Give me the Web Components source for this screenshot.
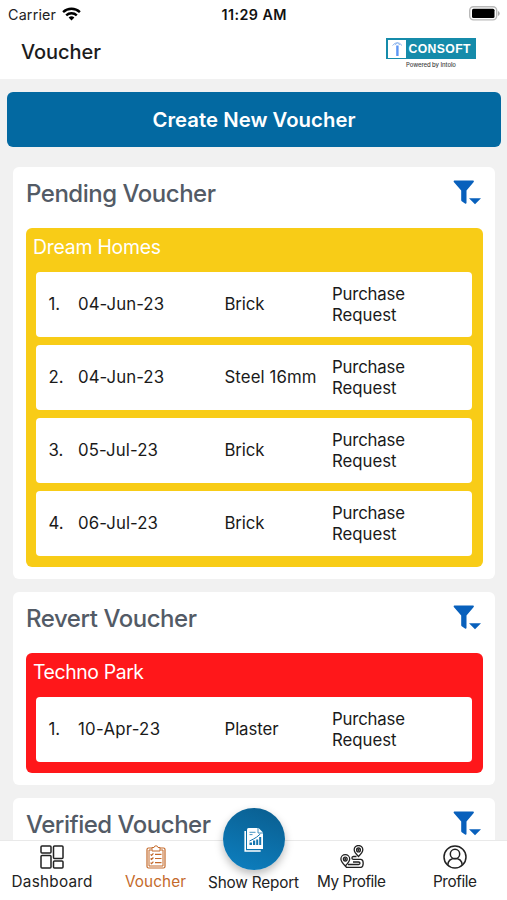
<!DOCTYPE html>
<html lang="en">
<head>
<meta charset="utf-8">
<title>Voucher</title>
<style>
html,body{margin:0;height:100%;overflow:hidden}
body{font-family:Inter,"Liberation Sans",sans-serif;background:#f1f1f1}
</style>
</head>
<body>
<voucher-app></voucher-app>
<script>
const define = (name, html, after) => customElements.define(name, class extends HTMLElement {
  connectedCallback() {
    if (this.shadowRoot) return;
    this.attachShadow({mode: 'open'}).innerHTML = typeof html === 'function' ? html(this) : html;
    if (after) after(this);
  }
});

/* One line of text, tracked so that it fills the given width. */
define('fit-text', '<style>:host{display:block;white-space:nowrap}span{display:inline-block}</style><span><slot></slot></span>', el => {
  const s = el.shadowRoot.querySelector('span');
  const n = el.textContent.length;
  const gap = (parseFloat(el.getAttribute('w')) - s.getBoundingClientRect().width) / (n - 1);
  s.style.letterSpacing = gap.toFixed(3) + 'px';
  s.style.marginRight = (-gap).toFixed(3) + 'px';
});

define('status-bar', `<style>
:host{display:grid;grid-template-columns:1fr auto 1fr;align-items:center;height:28px;padding:0 7px 0 8px;box-sizing:border-box;font-size:14.3px;color:#222}
.l{display:flex;align-items:center;gap:6px}.t{font-weight:600;color:#111}.b{justify-self:end;position:relative;top:-1px}svg{display:block}
</style>
<div class="l"><fit-text w="48">Carrier</fit-text>
<svg width="19" height="14" viewBox="0 0 19 14" fill="none" stroke="#000" stroke-width="2.4"><path d="M1.1 5.2a12 12 0 0 1 16.8 0M4.2 8.4a7.6 7.6 0 0 1 10.6 0"/><path d="M9.5 13.6l-2.9-3a4.1 4.1 0 0 1 5.8 0z" fill="#000" stroke="none"/></svg></div>
<fit-text class="t" w="65">11:29 AM</fit-text>
<svg class="b" width="31" height="15" viewBox="0 0 31 15"><rect x=".7" y=".7" width="27" height="13.2" rx="3.8" fill="#fff" stroke="#b9b9b9" stroke-width="1.4"/><rect x="3" y="2.7" width="22.5" height="9.4" rx="1.5"/><path d="M29 5v5q1.7-.8 1.7-2.5T29 5z" fill="#aaa"/></svg>`);

define('brand-logo', `<style>
:host{display:block;width:90px;text-align:center}
.m{display:flex;height:21px;box-sizing:border-box;background:#158baa;padding:1.5px;align-items:center}
svg{display:block;background:#fff}.n{font:700 12.2px "Liberation Sans",sans-serif;color:#fff;margin-left:3px}
.p{font:500 6px/7px Inter,sans-serif;color:#444;margin:1.5px 0 0 20px}
</style>
<div class="m"><svg width="18" height="18" viewBox="0 0 18 18"><path d="M8.2 5.5h2.4V16H8.2z" fill="#5b95f4"/><path d="M4.5 5.5Q9.4-.2 14 5.5M6.8 4.8L9.4 3l2.5 1.8" fill="none" stroke="#8db5ee" stroke-width="1"/></svg><fit-text class="n" w="62">CONSOFT</fit-text></div>
<fit-text class="p" w="50" style="text-align:left">Powered by Intolo</fit-text>`);

define('app-header', `<style>
:host{display:flex;justify-content:space-between;height:51px;box-sizing:border-box;padding:10px 31px 0 21px;font-size:20px;font-weight:500;color:#1c1c1c}
.t{line-height:28px}
</style><fit-text class="t" w="80">Voucher</fit-text><brand-logo></brand-logo>`);

define('primary-button', `<style>
:host{display:flex;align-items:center;justify-content:center;height:55px;margin:12.5px 6.3px 0 7.3px;border-radius:6px;background:#0369a1;color:#fff;font-size:20.3px;font-weight:600}
</style><slot></slot>`);

define('filter-icon', `<style>:host{display:block}svg{display:block}</style>
<svg width="28" height="25" viewBox="0 0 28 25" fill="#0860bc"><path d="M1.3.6h18.9q1.2.2.5 1.3L13.5 10.5v12.3q-.2 1.4-1.5.7l-3.3-2.2q-.5-.4-.5-1.2v-9.6L.8 1.9Q.2.8 1.3.6z"/><path d="M16 18.2h12l-6 6z"/></svg>`);

define('voucher-card', el => `<style>
:host{display:block;background:#fff;border-radius:6px;padding:0 12.5px 12px;margin:0 12px 12.5px 13px}
header{display:flex;justify-content:space-between;height:61px;box-sizing:border-box;padding:13.5px 1.5px 0 .5px;font-size:24px;font-weight:500;color:#535b66}
.t{line-height:28px}
</style><header><fit-text class="t" w="${el.getAttribute('w')}">${el.getAttribute('heading')}</fit-text><filter-icon></filter-icon></header><slot></slot>`);

define('site-panel', el => `<style>
:host{display:block;border-radius:6px;background:${el.getAttribute('tone')};padding:0 11px 11px 10.5px}
h3{margin:0 0 0 -3px;height:44px;line-height:39px;font-size:19.4px;font-weight:400;color:#fff}
.rows{display:grid;gap:7.5px}
</style><h3><fit-text w="${el.getAttribute('w')}">${el.getAttribute('heading')}</fit-text></h3><div class="rows"><slot></slot></div>`);

define('voucher-row', el => { const a = k => el.getAttribute(k); return `<style>
:host{display:grid;grid-template-columns:29.5px 146.500px 107.5px 1fr;align-items:center;height:65.5px;box-sizing:border-box;padding:1px 0 0 12.5px;border-radius:4px;background:#fff;font-size:16.8px;line-height:21px;color:#1a1a1a}
</style><span>${a('n')}.</span><fit-text w="${a('dw')}">${a('date')}</fit-text><fit-text w="${a('iw')}">${a('item')}</fit-text><div><fit-text w="73">Purchase</fit-text><fit-text w="64.5">Request</fit-text></div>`; });

define('nav-item', el => `<style>
:host{display:flex;flex-direction:column;align-items:center;color:#222;font-size:15.3px}
:host([active]){color:#c46a2b}
.i{height:32px;display:flex;align-items:center}.t{line-height:18px}
</style><div class="i"><slot></slot></div><fit-text class="t" w="${el.getAttribute('w')}">${el.getAttribute('label')}</fit-text>`);

define('report-button', `<style>
:host{display:flex;flex-direction:column;align-items:center;margin-top:-33px;font-size:15.3px;color:#222}
.c{width:62px;height:62px;border-radius:50%;background:linear-gradient(20deg,#0d80c1,#0a5d8e);display:flex;align-items:center;justify-content:center;box-shadow:0 4px 9px #0004}
.t{line-height:20px;margin-top:3px}
</style><div class="c"><svg width="20" height="25" viewBox="0 0 20 25"><path d="M1.2 4v20h15.5" fill="none" stroke="#fff" stroke-width="1.6"/><path d="M4.5 1h10L19 5.5V22H3V2.5Q3 1 4.5 1z" fill="#fff"/><path d="M14 1v5h5M5.5 5.3h6M5.5 7.6h3" fill="none" stroke="#1476b0" stroke-width=".8"/><path d="M5.5 18v-2.5H8V18zM9 18v-4.5h2.2V18zM12.2 18v-5.500h2V18zM15.200 18v-8h2v8z" fill="#1476b0"/><path d="M5.500 14l4-2 3-1.800 3.800-3.200" fill="none" stroke="#1476b0"/></svg></div>
<fit-text class="t" w="91">Show Report</fit-text>`);

define('tab-bar', `<style>
:host{display:grid;grid-template-columns:104px 103px 93px 103px 104px;height:60px;box-sizing:border-box;border-top:1px solid #e9e9e9;background:#fff}
svg{display:block;fill:none;stroke:currentColor}
</style>
<nav-item label="Dashboard" w="81"><svg width="24" height="24" viewBox="0 0 24 24" stroke-width="1.5"><rect x="1" y="1" width="10" height="7" rx="1"/><rect x="1" y="10.500" width="10" height="12.500" rx="1"/><rect x="13.500" y="1" width="9.500" height="12.500" rx="1"/><rect x="13.500" y="16" width="9.500" height="7" rx="1"/></svg></nav-item>
<nav-item active label="Voucher" w="61"><svg width="20" height="24" viewBox="0 0 20 24" stroke-width="1.200"><path d="M6 3H2.500Q1 3 1 4.500v17Q1 23 2.500 23h15q1.500 0 1.500-1.500v-17Q19 3 17.500 3H14"/><path d="M6 2.500h2Q8.300.8 10 .8t2 1.700h2V6H6zM5.500 5H3v16h14V5h-2.500" stroke-width="1"/><path d="M4.600 9.300l1 1 1.800-2M9 9.300h6.500M4.600 13.500l1 1 1.800-2M9 13.500h6.500M4.600 17.700l1 1 1.800-2M9 17.700h6.500"/></svg></nav-item>
<report-button></report-button>
<nav-item label="My Profile" w="69"><svg width="24" height="24" viewBox="0 0 24 24" stroke-width="1.300"><path d="M18.500 11.500q-4.300-4.300-4.300-6.700a4.300 4.300 0 0 1 8.600 0q0 2.400-4.300 6.700z"/><circle cx="18.500" cy="4.900" r="1.900"/><circle cx="18.500" cy="4.900" r=".5"/><path d="M5.300 21Q.9 16.500.9 14a4.400 4.400 0 0 1 8.800 0q0 2.500-4.400 7z"/><circle cx="5.300" cy="14.100" r="1.900"/><circle cx="5.300" cy="14.100" r=".5"/><path d="M16.500 11.500h-3q-1.600.2-1.600 1.500t1.600 1.400h7.500q2.200.3 2.200 3.800t-2.200 4.100H6.500l-1.200-1.300M8 19.500h10.500q1.500-.2 1.500-1.300t-1.500-1.200h-5.500"/></svg></nav-item>
<nav-item label="Profile" w="44"><svg width="24" height="24" viewBox="0 0 24 24" stroke-width="1.500"><circle cx="12" cy="12" r="11"/><circle cx="12" cy="9" r="4.700"/><path d="M4.800 20q.4-6.500 7.200-6.500t7.200 6.500"/></svg></nav-item>`);

define('voucher-app', `<style>
:host{display:flex;flex-direction:column;height:900px;overflow:hidden}
.top{background:#fff;flex:none}
main{flex:1;min-height:0;overflow:hidden}
tab-bar{flex:none;position:relative}
.list{padding-top:20px}
</style>
<div class="top"><status-bar></status-bar><app-header></app-header></div>
<main><primary-button><fit-text w="203">Create New Voucher</fit-text></primary-button>
<div class="list">
<voucher-card heading="Pending Voucher" w="190"><site-panel heading="Dream Homes" w="128" tone="#f8cc17">
<voucher-row n="1" date="04-Jun-23" dw="86" item="Brick" iw="40"></voucher-row>
<voucher-row n="2" date="04-Jun-23" dw="86" item="Steel 16mm" iw="92"></voucher-row>
<voucher-row n="3" date="05-Jul-23" dw="80" item="Brick" iw="40"></voucher-row>
<voucher-row n="4" date="06-Jul-23" dw="80" item="Brick" iw="40"></voucher-row>
</site-panel></voucher-card>
<voucher-card heading="Revert Voucher" w="171"><site-panel heading="Techno Park" w="111" tone="#ff171a">
<voucher-row n="1" date="10-Apr-23" dw="82" item="Plaster" iw="54"></voucher-row>
</site-panel></voucher-card>
<voucher-card heading="Verified Voucher" w="185"></voucher-card>
</div></main>
<tab-bar></tab-bar>`);
</script>
</body>
</html>
